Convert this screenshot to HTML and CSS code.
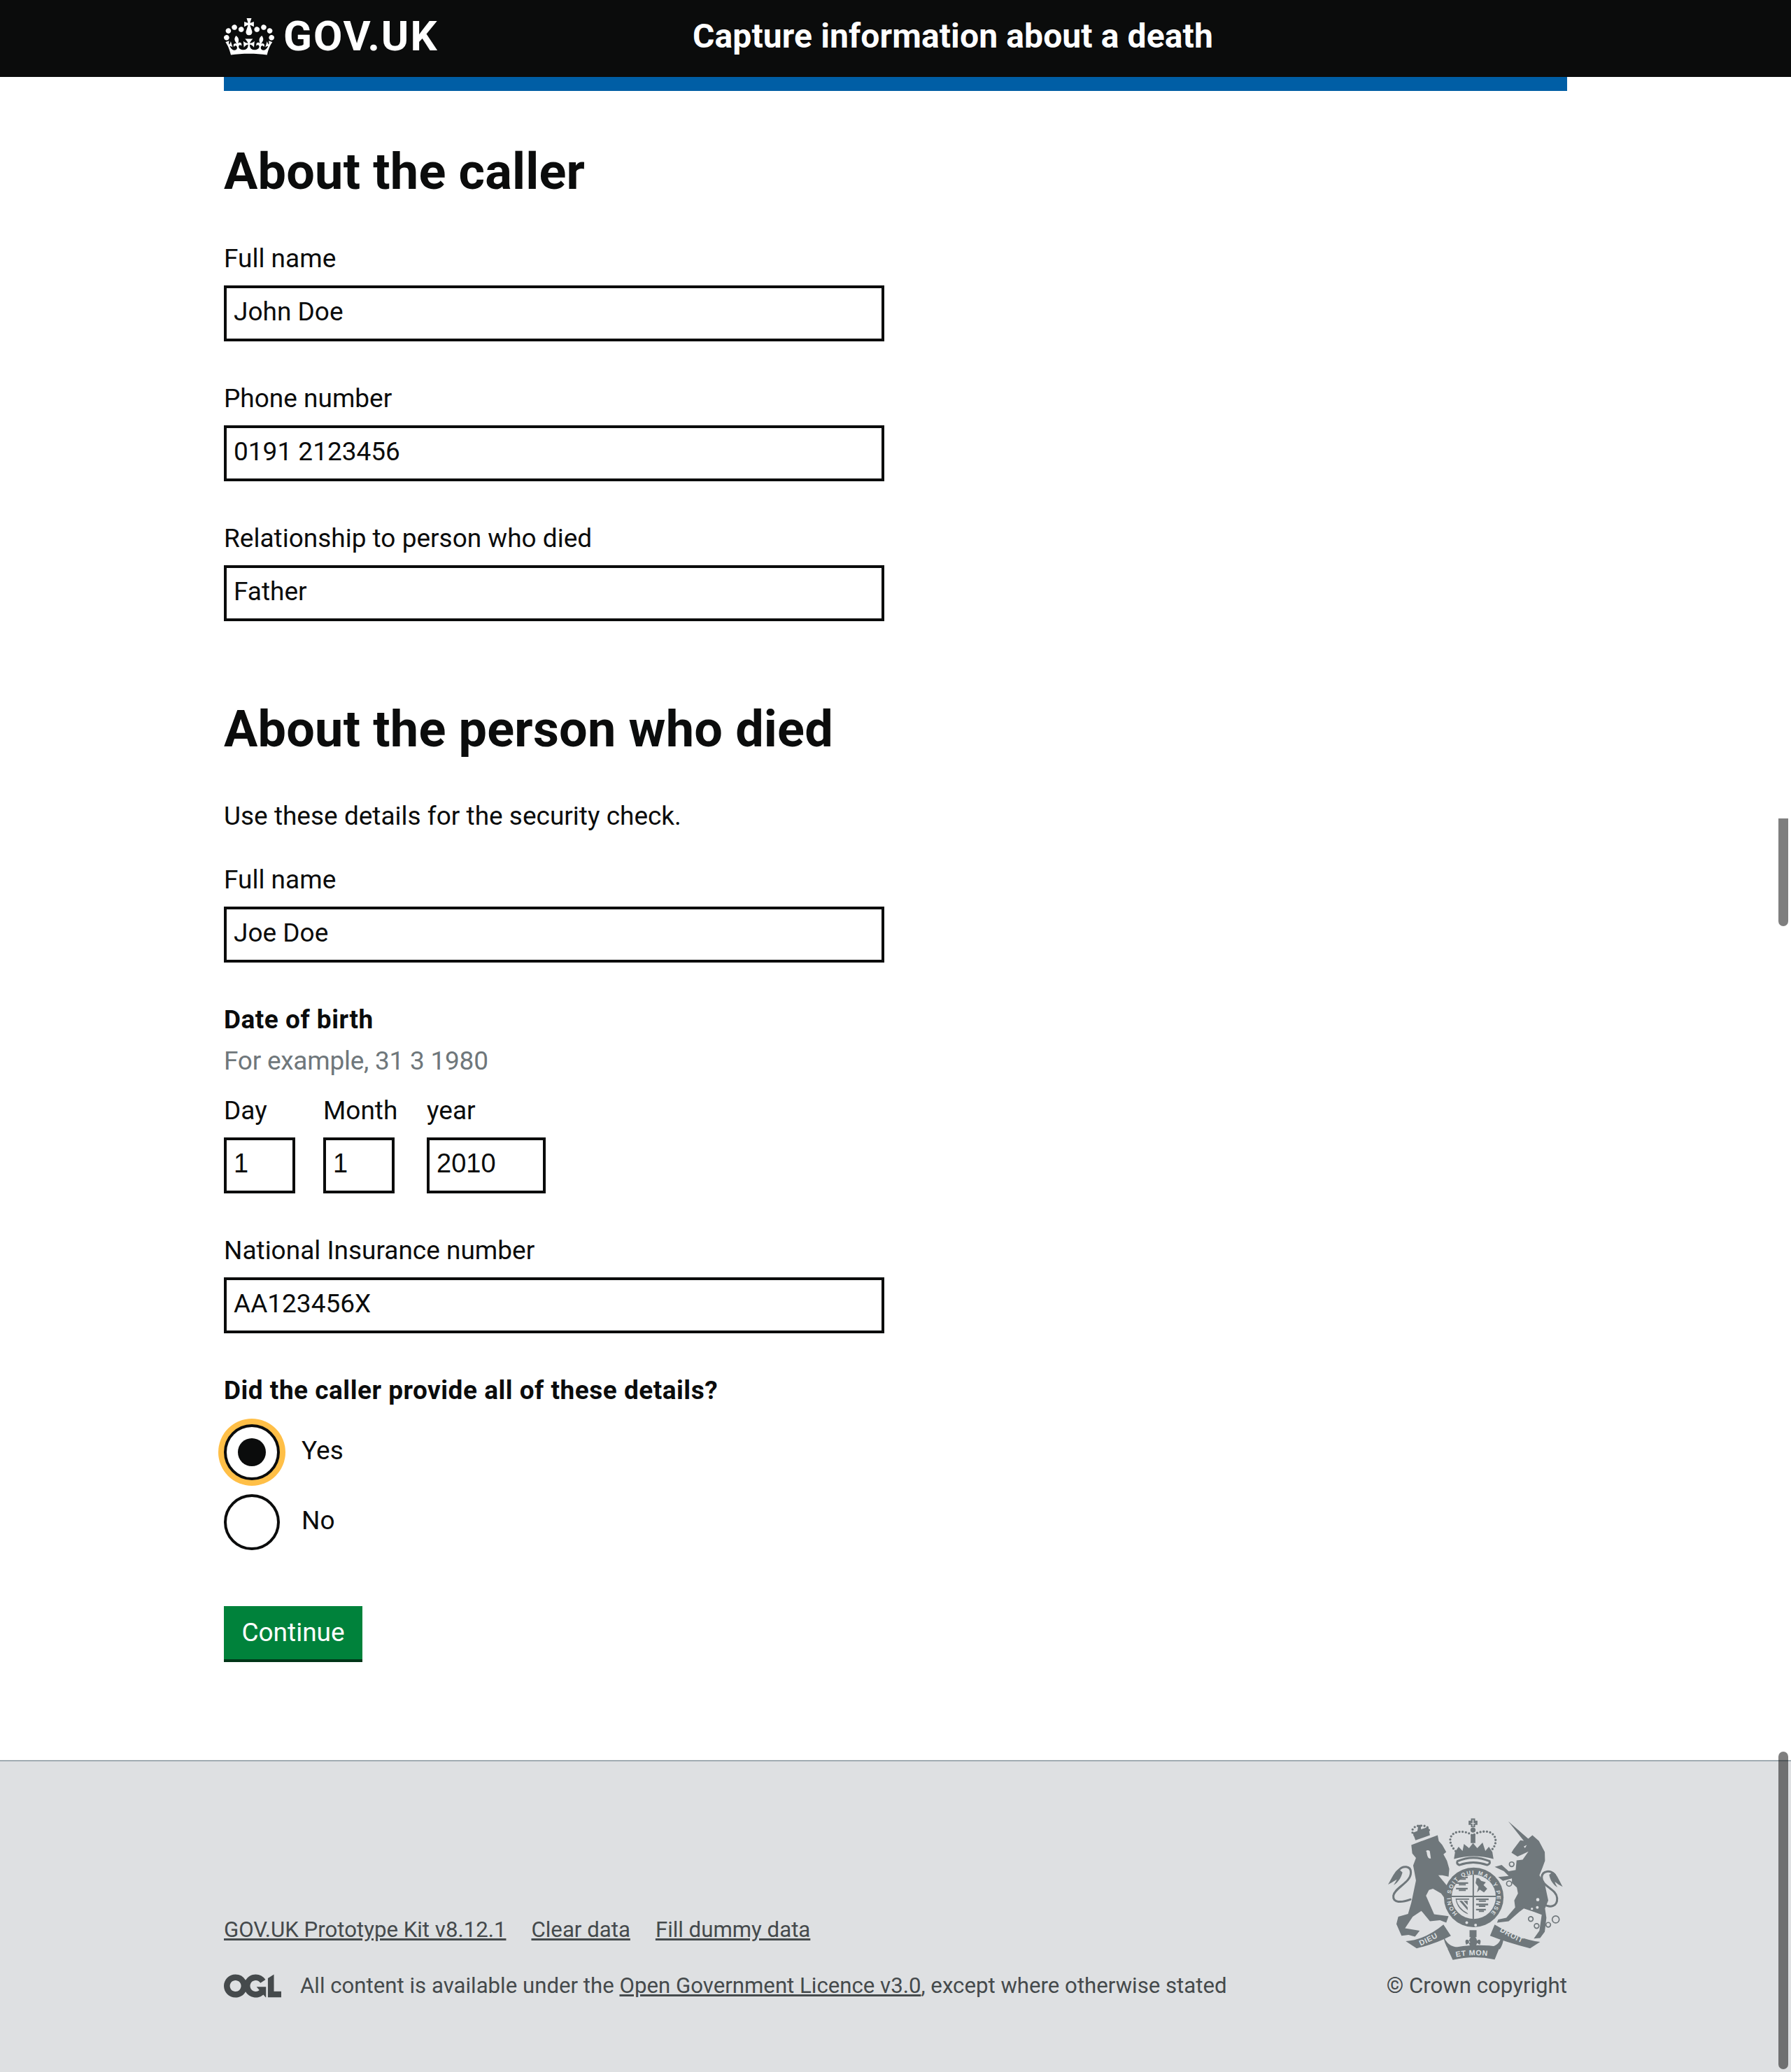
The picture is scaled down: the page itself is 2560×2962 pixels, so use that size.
FILE: index.html
```html
<!DOCTYPE html>
<html lang="en">
<head>
<meta charset="utf-8">
<title>Capture information about a death</title>
<link rel="stylesheet" href="styles.css">
</head>
<body>
<header class="site-header">
  <div class="wrap header-row">
    <a class="logo" href="#">
      <svg class="crown" viewBox="0 0 132 97" aria-hidden="true"><path d="M25 30.2c3.5 1.5 7.7-.2 9.1-3.7 1.5-3.6-.2-7.8-3.9-9.2-3.6-1.4-7.6.3-9.1 3.9-1.4 3.5.3 7.5 3.9 9zM9 39.5c3.6 1.5 7.8-.2 9.2-3.7 1.5-3.6-.2-7.8-3.9-9.1-3.6-1.5-7.6.2-9.1 3.8-1.4 3.5.3 7.5 3.8 9zM4.4 57.2c3.5 1.5 7.7-.2 9.1-3.8 1.5-3.6-.2-7.7-3.9-9.1-3.5-1.5-7.6.3-9.1 3.8-1.4 3.5.3 7.6 3.9 9.1zm38.3-21.4c3.5 1.5 7.7-.2 9.1-3.8 1.5-3.6-.2-7.7-3.9-9.1-3.6-1.5-7.6.3-9.1 3.8-1.3 3.6.4 7.7 3.9 9.1zm64.4-5.6c-3.6 1.5-7.8-.2-9.1-3.7-1.5-3.6.2-7.8 3.8-9.2 3.6-1.4 7.7.3 9.2 3.9 1.3 3.5-.4 7.5-3.9 9zm15.9 9.3c-3.6 1.5-7.7-.2-9.1-3.7-1.5-3.6.2-7.8 3.7-9.1 3.6-1.5 7.7.2 9.2 3.8 1.5 3.5-.3 7.5-3.8 9zm4.7 17.7c-3.6 1.5-7.8-.2-9.2-3.8-1.5-3.6.2-7.7 3.9-9.1 3.6-1.5 7.7.3 9.2 3.8 1.3 3.5-.4 7.6-3.9 9.1zM89.3 35.8c-3.6 1.5-7.8-.2-9.2-3.8-1.4-3.6.2-7.7 3.9-9.1 3.6-1.5 7.7.3 9.2 3.8 1.4 3.6-.3 7.7-3.9 9.1zM69.7 17.7l8.9 4.7V9.3l-8.9 2.8c-.2-.3-.5-.6-.9-.9L72.4 0H59.6l3.5 11.2c-.3.3-.6.5-.9.9l-8.8-2.8v13.1l8.8-4.7c.3.3.6.7.9.9l-5 15.4v.1c-.2.8-.4 1.6-.4 2.4 0 4.1 3.1 7.5 7 8.1h.2c.3 0 .7.1 1 .1.4 0 .7 0 1-.1h.2c4-.6 7.1-4.1 7.1-8.1 0-.8-.1-1.7-.4-2.4V34l-5.1-15.4c.4-.2.7-.6 1-.9zM66 92.8c16.9 0 32.8 1.1 47.1 3.2 4-16.9 8.9-26.7 14-33.5l-9.6-3.4c1 4.9 1.1 7.2 0 10.2-1.5-1.4-3-4.3-4.2-8.7L108.6 76c2.8-2 5-3.2 7.5-3.3-4.4 9.4-10 11.9-13.6 11.2-4.3-.8-6.3-4.6-5.6-7.9 1-4.7 5.7-5.9 8-.5 4.3-8.7-3-11.4-7.6-8.8 7.1-7.2 7.9-13.5 2.1-21.1-8 6.1-8.1 12.3-4.5 20.8-4.7-5.4-12.1-2.5-9.5 6.2 3.4-5.2 7.9-2 7.2 3.1-.6 4.3-6.4 7.8-13.5 7.2-10.3-.9-10.9-8-11.2-13.8 2.5-.5 7.1 1.8 11 7.3L80.2 60c-4.1 4.4-8 5.3-12.3 5.4 1.4-4.4 8-11.6 8-11.6H55.5s6.4 7.2 7.9 11.6c-4.2-.1-8-1-12.3-5.4l1.4 16.4c3.9-5.5 8.5-7.7 10.9-7.3-.3 5.8-.9 12.8-11.1 13.8-7.2.6-12.9-2.9-13.5-7.2-.7-5 3.8-8.3 7.1-3.1 2.7-8.7-4.6-11.6-9.4-6.2 3.7-8.5 3.6-14.7-4.6-20.8-5.8 7.6-5 13.9 2.2 21.1-4.7-2.6-11.9.1-7.7 8.8 2.3-5.5 7.1-4.2 8.1.5.7 3.3-1.3 7.1-5.7 7.9-3.5.7-9-1.8-13.5-11.2 2.5.1 4.7 1.3 7.5 3.3l-4.7-15.4c-1.2 4.4-2.7 7.2-4.3 8.7-1.1-3-.9-5.3 0-10.2l-9.5 3.4c5 6.9 9.9 16.7 14 33.5 14.8-2.1 30.8-3.2 47.7-3.2z"/></svg>
      <span class="logo-text">GOV.UK</span>
    </a>
    <span class="service-name">Capture information about a death</span>
  </div>
</header>
<div class="wrap"><div class="header-bar"></div></div>

<main class="wrap main">
  <h1 class="heading">About the caller</h1>
  <div class="field"><label class="label">Full name</label><div class="input" role="textbox">John Doe</div></div>
  <div class="field"><label class="label">Phone number</label><div class="input" role="textbox">0191 2123456</div></div>
  <div class="field"><label class="label">Relationship to person who died</label><div class="input" role="textbox">Father</div></div>

  <h1 class="heading heading-second">About the person who died</h1>
  <p class="lead">Use these details for the security check.</p>
  <div class="field"><label class="label">Full name</label><div class="input" role="textbox">Joe Doe</div></div>

  <div class="field date-field">
    <div class="legend">Date of birth</div>
    <div class="hint">For example, 31 3 1980</div>
    <div class="date-row">
      <div class="date-item date-day"><label class="label">Day</label><div class="input input-date" role="textbox">1</div></div>
      <div class="date-item date-month"><label class="label">Month</label><div class="input input-date input-short" role="textbox">1</div></div>
      <div class="date-item date-year"><label class="label">year</label><div class="input input-date" role="textbox">2010</div></div>
    </div>
  </div>

  <div class="field"><label class="label">National Insurance number</label><div class="input" role="textbox">AA123456X</div></div>

  <div class="legend legend-radios">Did the caller provide all of these details?</div>
  <div class="radios">
    <div class="radio"><span class="radio-mark is-checked"></span><span class="radio-label">Yes</span></div>
    <div class="radio"><span class="radio-mark"></span><span class="radio-label">No</span></div>
  </div>
  <button class="button" type="button">Continue</button>
</main>

<footer class="footer">
  <div class="wrap footer-row">
    <div class="footer-meta">
      <ul class="footer-links">
        <li><a href="#">GOV.UK Prototype Kit v8.12.1</a></li>
        <li><a href="#">Clear data</a></li>
        <li><a href="#">Fill dummy data</a></li>
      </ul>
      <div class="licence">
        <svg class="ogl" viewBox="0 0 483.2 195.7" aria-hidden="true"><path d="M421.5 142.8V.1l-50.7 32.3v161.1h112.4v-50.7zm-122.3-9.6A47.12 47.12 0 0 1 221 97.8c0-26 21.1-47.1 47.1-47.1 16.7 0 31.4 8.7 39.7 21.8l42.7-27.2A97.63 97.63 0 0 0 268.1 0c-36.5 0-68.3 20.1-85.1 49.7A98 98 0 0 0 97.8 0C43.9 0 0 43.9 0 97.8s43.9 97.8 97.8 97.8c36.5 0 68.3-20.1 85.1-49.7a97.76 97.76 0 0 0 149.6 25.4l19.4 22.2h3v-87.8h-80l24.3 27.5zM97.8 145c-26 0-47.1-21.1-47.1-47.1s21.1-47.1 47.1-47.1 47.2 21 47.2 47S123.8 145 97.8 145"/></svg>
        <span>All content is available under the <a href="#">Open Government Licence v3.0</a>, except where otherwise stated</span>
      </div>
    </div>
    <div class="copyright">
      <svg class="crest" viewBox="60 105 775 630" aria-hidden="true">
        <defs>
          <path id="garter-ring" d="M370 527 A99 99 0 1 1 510 527"/>
          <path id="rib-l" d="M205 668 Q 260 645 318 610"/>
          <path id="rib-c" d="M350 716 Q 440 696 530 714"/>
          <path id="rib-r" d="M548 600 Q 610 640 676 664"/>
        </defs>
        <g class="crest-ink">
          <path d="M190 212 L178 180 L198 172 L203 146 L212 146 L214 165 L245 155 L252 190 Z"/>
          <path d="M172 232 L215 216 L285 190 L290 215 L305 232 L322 262 L310 272 L325 300 L335 335 L332 368 L305 362 L288 362 L318 398 L345 432 L340 462 L322 470 L300 440 L265 420 L248 425 L235 450 L270 530 L332 538 L322 566 L295 555 L252 560 L215 515 L178 540 L145 590 L208 600 L188 626 L160 618 L130 622 L108 572 L116 540 L158 528 L172 480 L192 385 L180 320 L192 288 L176 268 Z"/>
          <path d="M118 335 C100 345 88 375 72 402 C92 392 100 385 110 380 C104 392 100 398 96 404 C112 396 128 375 134 350 Z"/>
          <path d="M588 130 L674 205 L692 190 L720 215 L745 262 L746 300 L735 330 L722 362 L745 400 L760 470 L746 505 L752 545 L745 605 L725 632 L698 634 L722 600 L732 532 L700 520 L655 505 L635 520 L590 560 L540 566 L545 552 L580 545 L618 500 L614 470 L630 440 L625 415 L604 395 L604 376 L565 386 L545 370 L590 365 L570 345 L530 326 L560 318 L590 345 L620 340 L624 298 L650 295 L675 260 L650 272 L628 282 L602 265 L610 252 L640 212 L655 214 Z"/>
          <path d="M780 348 C798 358 808 388 822 412 C806 404 796 396 788 390 C792 402 796 408 800 414 C784 406 768 385 764 360 Z"/>
          <path d="M355 292 L360 262 L375 240 L392 258 L398 228 L420 246 L437 224 L455 246 L478 222 L490 258 L505 240 L520 262 L525 292 Q440 268 355 292 Z"/>
          <path d="M428 118 h18 v10 h10 v18 h-10 v10 h-18 v-10 h-10 v-18 h10 Z"/>
          <circle cx="437" cy="168" r="11"/>
          <rect x="427" y="186" width="20" height="38"/>
          <circle cx="440" cy="457" r="128"/>
          <path d="M148 645 Q 230 640 310 574 L342 622 Q 280 655 195 676 Z"/>
          <path d="M310 622 Q 326 668 372 672 L330 680 Q 312 650 310 622 Z"/>
          <path d="M328 678 L350 726 Q 440 704 530 724 L552 670 Q 440 652 328 678 Z"/>
          <path d="M530 574 Q 640 640 725 648 L682 676 Q 580 650 510 622 Z"/>
          <path d="M556 628 Q 555 660 510 672 L552 680 Q 566 660 568 632 Z"/>
          <rect x="422" y="598" width="30" height="30"/>
          <path d="M437 618 C455 632 462 650 445 672 L429 672 C412 650 420 632 437 618 Z M425 650 C410 628 398 642 408 660 Z M449 650 C464 628 476 642 466 660 Z"/>
        </g>
        <g class="crest-none">
          <path d="M168 466 C130 480 92 482 95 450 C100 415 170 395 170 350 C170 320 135 320 118 340"/>
          <path d="M740 486 C770 505 800 495 798 460 C795 420 730 410 732 370 C735 340 770 340 788 360"/>
          <path class="dots" d="M186 190 C165 175 180 150 205 150 C235 145 255 160 245 178"/>
          <path class="dots" d="M362 258 C330 225 330 185 372 176 C400 172 425 182 435 192 C448 180 480 170 505 176 C545 190 540 235 512 258"/>
          <path d="M370 302 Q 438 272 508 302 Q 512 314 498 318 Q 438 296 378 318 Q 364 312 370 302 Z"/>
          <circle class="ring" cx="603" cy="315" r="10"/>
          <circle class="ring" cx="592" cy="398" r="11"/>
          <circle class="ring" cx="726" cy="423" r="9"/>
          <circle class="ring" cx="685" cy="550" r="10"/>
          <circle class="ring" cx="710" cy="580" r="10"/>
          <circle class="ring" cx="760" cy="575" r="10"/>
          <circle class="ring" cx="792" cy="552" r="15"/>
        </g>
        <g class="crest-ground">
          <circle cx="715" cy="467" r="7"/>
          <circle cx="713" cy="500" r="6"/>
          <circle cx="690" cy="506" r="5"/>
          <circle cx="440" cy="455" r="95"/>
          <circle cx="410" cy="566" r="6"/>
          <circle cx="448" cy="576" r="6"/>
          <rect x="428" y="138" width="18" height="3"/>
          <rect x="435" y="124" width="4" height="28"/>
          <path d="M655 238 L668 232 L660 246 Z"/>
          <path d="M238 262 C228 255 252 250 252 262 L256 290 C244 292 240 280 238 262 Z"/>
        </g>
        <g class="crest-ink">
          <rect x="435" y="345" width="6" height="220"/>
          <rect x="345" y="450" width="190" height="6"/>
          <path d="M364 368 h50 v7 h-50 Z M376 376 h30 v6 h-30 Z M362 392 h54 v7 h-54 Z M376 400 h30 v6 h-30 Z M364 416 h50 v7 h-50 Z M376 424 h30 v6 h-30 Z"/>
          <path d="M452 374 L462 374 L472 386 L492 392 L482 404 L498 420 L484 436 L466 424 L454 436 L460 412 L448 396 Z"/>
          <path d="M362 462 h58 v5 h-54 Q 372 500 412 524 L416 530 Q 368 510 362 462 Z M378 472 L414 512 L414 500 L390 472 Z M396 472 L414 490 L414 472 Z"/>
          <path d="M450 462 h54 v7 h-54 Z M462 470 h30 v6 h-30 Z M450 484 h52 v7 h-52 Z M462 492 h28 v6 h-28 Z M450 506 h42 v7 h-42 Z M462 514 h22 v6 h-22 Z"/>
        </g>
        <g class="crest-text">
          <text class="crest-ring-text"><textPath href="#garter-ring" textLength="462" lengthAdjust="spacing">HONI SOIT QUI MAL Y PENSE</textPath></text>
          <text class="crest-t1"><textPath href="#rib-l" startOffset="6%">DIEU</textPath></text>
          <text class="crest-t1"><textPath href="#rib-c" startOffset="8%">ET MON</textPath></text>
          <text class="crest-t1"><textPath href="#rib-r" startOffset="2%">DROIT</textPath></text>
        </g>
      </svg>
      <span class="copyright-text">© Crown copyright</span>
    </div>
  </div>
</footer>

<div class="scroll-thumb thumb-inner"></div>
<div class="scroll-thumb thumb-page"></div>
</body>
</html>
```

FILE: styles.css
```css
* { box-sizing: border-box; }
html, body { margin: 0; padding: 0; }
body {
  position: relative;
  font-family: Roboto, "Liberation Sans", sans-serif;
  font-size: 37px;
  color: #0b0c0c;
  background: #fff;
}
a { color: inherit; text-decoration: underline; }
.wrap { width: 1920px; margin: 0 auto; }

.site-header { background: #0b0c0c; height: 110px; color: #fff; }
.header-row { display: flex; align-items: center; height: 110px; padding-bottom: 6px; }
.logo { display: flex; align-items: center; width: 670px; color: #fff; text-decoration: none; }
.crown { width: 72px; height: 53px; fill: #fff; margin-right: 13px; }
.logo-text { font-size: 60px; font-weight: 700; line-height: 1; letter-spacing: 2px; }
.service-name { font-size: 48px; font-weight: 700; line-height: 1; letter-spacing: 0.12px; }
.header-bar { height: 20px; background: #005ea5; }

.main { padding-top: 76px; padding-bottom: 140px; }
.heading { font-size: 72px; font-weight: 700; line-height: 80px; margin: 0 0 62px; letter-spacing: 0.2px; }
.heading-second { margin-top: 115px; margin-bottom: 62px; }
.lead { margin: 0 0 47px; line-height: 44px; }
.field { margin-bottom: 60px; }
.label { display: block; line-height: 44px; margin-bottom: 16px; }
.input {
  height: 80px;
  border: 4px solid #0b0c0c;
  padding: 0 10px;
  line-height: 68px;
  width: 944px;
  background: #fff;
}
.legend { font-weight: 700; line-height: 44px; letter-spacing: 0.5px; }
.hint { color: #6f777b; line-height: 44px; margin: 15px 0 27px; letter-spacing: -0.25px; }
.date-row { display: flex; gap: 40px; }
.date-day { width: 102px; }
.date-month { width: 108px; }
.date-year { width: 170px; }
.input-date { width: 100%; font-family: "Liberation Sans", sans-serif; font-size: 38px; line-height: 66px; }
.input-short { width: 102px; }

.legend-radios { margin-bottom: 26px; }
.radios { display: flex; flex-direction: column; gap: 20px; margin-bottom: 80px; }
.radio { display: flex; align-items: center; gap: 31px; height: 80px; }
.radio-mark {
  display: block;
  width: 80px;
  height: 80px;
  border: 4px solid #0b0c0c;
  border-radius: 50%;
  background: #fff;
  position: relative;
}
.is-checked { box-shadow: 0 0 0 8px #ffbf47; }
.is-checked::after {
  content: "";
  position: absolute;
  left: 16px;
  top: 16px;
  width: 40px;
  height: 40px;
  border-radius: 50%;
  background: #0b0c0c;
}
.radio-label { line-height: 44px; padding-bottom: 4px; }
.button {
  display: block;
  height: 80px;
  width: 198px;
  border: 0;
  padding: 0 0 6px;
  background: #00823b;
  box-shadow: inset 0 -4px 0 #003618;
  color: #fff;
  font: inherit;
}

.footer { background: #dee0e2; border-top: 2px solid #a1acb2; color: #454a4c; padding: 77px 0 103px; font-size: 31.2px; }
.footer-row { display: flex; justify-content: space-between; align-items: flex-end; }
.footer-links { list-style: none; display: flex; gap: 36px; margin: 0 0 40px; padding: 0; line-height: 40px; }
.licence { display: flex; align-items: center; gap: 27px; line-height: 40px; }
.ogl { width: 82px; height: 34px; fill: #454a4c; }
.copyright { display: flex; flex-direction: column; align-items: flex-end; color: #454a4c; line-height: 40px; }
.crest { width: 258px; height: 210px; display: block; margin-bottom: 14px; margin-right: 2px; }
.crest-ink { fill: #6f777b; }
.crest-none { fill: none; stroke: #6f777b; stroke-width: 9; stroke-linecap: round; }
.crest-none .dots { stroke-dasharray: 0 14; stroke-width: 10; }
.crest-none .ring { stroke-width: 5; }
.crest-ground { fill: #dee0e2; }
.crest-text { fill: #dee0e2; font-family: "Liberation Sans", sans-serif; font-weight: 700; }
.crest-ring-text { font-size: 24px; }
.crest-t1 { font-size: 32px; letter-spacing: 2px; }

.scroll-thumb { position: absolute; left: 2542px; width: 14px; background: rgba(0, 0, 0, 0.5); }
.thumb-inner { top: 1170px; height: 154px; border-radius: 0 0 7px 7px; }
.thumb-page { top: 2504px; height: 454px; border-radius: 7px; }
```
